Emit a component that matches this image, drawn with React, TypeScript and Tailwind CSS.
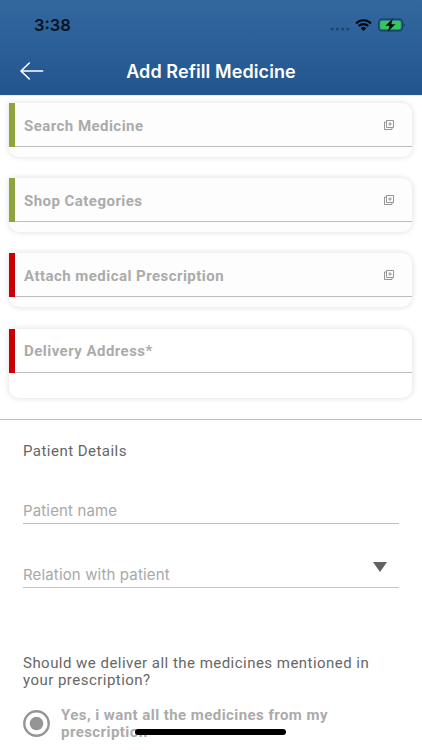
import React from 'react';

const cards = [
  { label: 'Search Medicine', required: false, icon: true, tall: false },
  { label: 'Shop Categories', required: false, icon: true, tall: false },
  { label: 'Attach medical Prescription', required: true, icon: true, tall: false },
  { label: 'Delivery Address*', required: true, icon: false, tall: true },
];

const AddIcon = () => (
  <svg width="10" height="10" viewBox="0 0 10 10" fill="none" stroke="#8a8a8a" strokeWidth="0.9">
    <path d="M2.5 .5h7v7h-7zM6 2.2v3.6M4.2 4h3.6M2.4 2H.5v7.5H8V7.6" />
  </svg>
);

const StatusBar = () => (
  <div className="flex h-[50px] items-center justify-between pr-[16px] pl-[34px]">
    <span className="font-['Inter'] text-[16.5px] leading-[20px] font-semibold text-[#071322]">3:38</span>
    <div className="flex items-center">
      <svg width="20" height="4" viewBox="0 0 20 4" className="mt-[8px] mr-[5px]" fill="#1d4571">
        <circle cx="2.2" cy="2" r="1.6" />
        <circle cx="7.4" cy="2" r="1.6" />
        <circle cx="12.6" cy="2" r="1.6" />
        <circle cx="17.8" cy="2" r="1.6" />
      </svg>
      <svg width="17" height="12" viewBox="0 0 17 12" className="mr-[6px]" fill="none" stroke="#020812" strokeWidth="2.1">
        <path d="M1 4.4a10.6 10.6 0 0 1 15 0M3.7 7.1a6.8 6.8 0 0 1 9.6 0" />
        <path d="M5.8 9.2a3.8 3.8 0 0 1 5.4 0L8.5 11.9z" fill="#020812" stroke="none" />
      </svg>
      <svg width="28" height="14" viewBox="0 0 28 14">
        <rect x=".6" y="1.1" width="23.8" height="11.8" rx="3.4" fill="none" stroke="#173d65" strokeWidth="1.1" />
        <rect x="2.2" y="2.7" width="20.6" height="8.6" rx="2" fill="#35c759" />
        <path d="M25.6 5v4c1.7-.7 1.7-3.3 0-4z" fill="#173d65" />
        <path d="M14.8.5 7.4 7.7h4.1L9.9 13.5l7.5-7.2h-4.1z" fill="#020812" />
      </svg>
    </div>
  </div>
);

const Header = () => (
  <header className="h-[95px] bg-linear-to-b from-[#33689f] to-[#22558e]">
    <StatusBar />
    <div className="relative flex h-[42px] items-center justify-center">
      <svg width="24" height="18" viewBox="0 0 24 18" className="absolute left-[20px]" fill="none" stroke="#fff" strokeWidth="1.6" strokeLinecap="round" strokeLinejoin="round">
        <path d="M9.3 1 1 9l8.3 8M1.2 9h21.4" />
      </svg>
      <h1 className="font-['Inter'] text-[18px] font-semibold tracking-[0.1px] whitespace-nowrap text-white">Add Refill Medicine</h1>
    </div>
  </header>
);

const App = () => {
  return (
    <div className="relative h-[750px] w-full overflow-hidden bg-white font-['Roboto',sans-serif]">
      <Header />
      <div className="h-px bg-[#e3efff]" />
      <div className="flex flex-col gap-[21.2px] pt-[7px] pr-[10px] pl-[9px]">
        {cards.map((card) => (
          <div
            key={card.label}
            className={`${card.tall ? 'h-[69px] bg-white' : 'h-[54px] bg-[#fdfdfd]'} rounded-[10px] rounded-tl-none shadow-[0_0_6px_rgba(0,0,0,0.14)]`}
          >
            <div
              className={`${card.required ? 'border-l-[#c80006]' : 'border-l-[#8fa43f]'} flex h-[44px] items-center justify-between border-l-6 pr-[18px] pb-px pl-[9px]`}
            >
              <span className="pt-[2px] text-[15px] leading-[18px] font-bold tracking-[0.46px] whitespace-nowrap text-[#ababab]">{card.label}</span>
              {card.icon && <AddIcon />}
            </div>
            <div className="-mt-px ml-[6px] h-px bg-[#bdbdbd]" />
          </div>
        ))}
      </div>

      <div className="mt-[21px] h-px bg-[#bdbdbd]" />

      <div className="px-[23px]">
        <h2 className="mt-[22px] text-[15px] leading-[18px] tracking-[0.47px] text-[#666666]">Patient Details</h2>
        <div className="mt-[40px] flex h-[24px] border-b border-[#bdbdbd]">
          <span className="pt-px font-['Inter'] text-[15px] leading-[20px] tracking-[0.15px] text-[#a8a8a8]">Patient name</span>
        </div>
        <div className="mt-[40px] flex h-[24px] justify-between border-b border-[#c4c4c4] pr-[12px]">
          <span className="pt-px font-['Inter'] text-[15px] leading-[20px] tracking-[0.15px] text-[#a8a8a8]">Relation with patient</span>
          <svg width="14" height="10" viewBox="0 0 14 10" className="-mt-[2px]">
            <path d="M0 0h14L7 10z" fill="#616161" />
          </svg>
        </div>
        <p className="mt-[67px] text-[15px] leading-[17.5px] tracking-[0.47px] whitespace-nowrap text-[#666666]">
          Should we deliver all the medicines mentioned in
          <br />
          your prescription?
        </p>
        <div className="mt-[17px] flex">
          <svg width="27" height="27" viewBox="0 0 27 27" className="mt-[3px] mr-[11px]">
            <circle cx="13.5" cy="13.5" r="12.2" fill="none" stroke="#959595" strokeWidth="2.4" />
            <circle cx="13.5" cy="13.5" r="6.8" fill="#959595" />
          </svg>
          <p className="text-[15px] leading-[17.5px] font-bold tracking-[0.44px] whitespace-nowrap text-[#ababab]">
            Yes, i want all the medicines from my
            <br />
            prescription
          </p>
        </div>
      </div>

      <div className="absolute top-[729px] left-[135px] h-[6px] w-[151px] rounded-full bg-black" />
    </div>
  );
};

export default App;
